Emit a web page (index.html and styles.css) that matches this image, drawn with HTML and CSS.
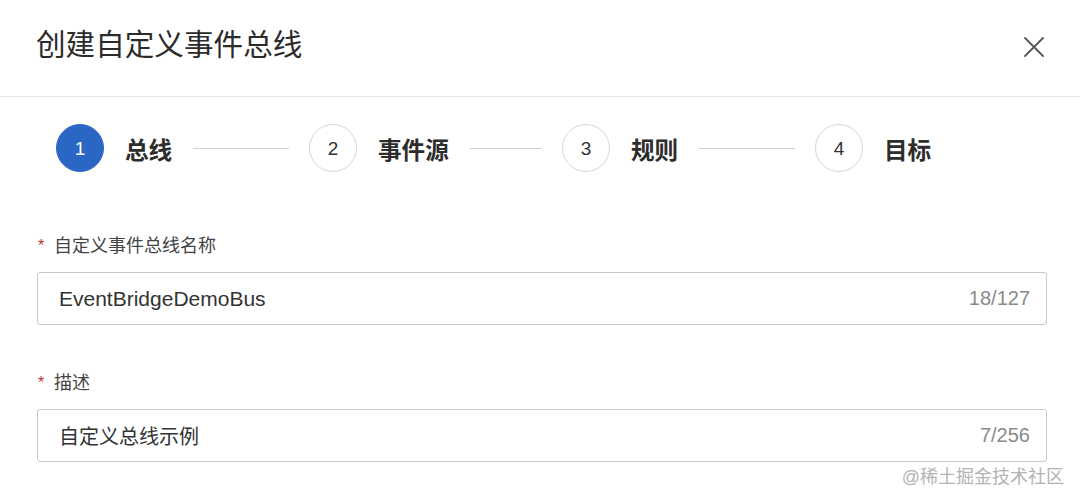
FILE: index.html
```html
<!DOCTYPE html>
<html lang="zh-CN">
<head>
<meta charset="utf-8">
<title>创建自定义事件总线</title>
<link rel="stylesheet" href="styles.css">
</head>
<body>
<div class="dialog">
  <header class="header">
    <h1 class="title">创建自定义事件总线</h1>
    <button class="close" aria-label="关闭">
      <svg width="20" height="20" viewBox="0 0 20 20"><path d="M1 1 L19 19 M19 1 L1 19" stroke="#555" stroke-width="1.8" fill="none" stroke-linecap="round"/></svg>
    </button>
  </header>
  <div class="steps">
    <div class="step active"><span class="dot">1</span><span class="step-label">总线</span><span class="line"></span></div>
    <div class="step"><span class="dot">2</span><span class="step-label">事件源</span><span class="line"></span></div>
    <div class="step"><span class="dot">3</span><span class="step-label">规则</span><span class="line"></span></div>
    <div class="step last"><span class="dot">4</span><span class="step-label">目标</span></div>
  </div>
  <form class="form">
    <div class="item">
      <label class="label"><span class="req">*</span>自定义事件总线名称</label>
      <div class="input"><span class="value latin">EventBridgeDemoBus</span><span class="count">18/127</span></div>
    </div>
    <div class="item second">
      <label class="label"><span class="req">*</span>描述</label>
      <div class="input"><span class="value">自定义总线示例</span><span class="count">7/256</span></div>
    </div>
  </form>
  <div class="watermark">@稀土掘金技术社区</div>
</div>
</body>
</html>
```
FILE: styles.css
```css
* { box-sizing: border-box; }
html, body { margin: 0; padding: 0; background: #fff; }
body {
  font-family: "Liberation Sans", "Noto Sans CJK SC", sans-serif;
  color: #333;
  width: 1080px;
  height: 502px;
  overflow: hidden;
}
.dialog { position: relative; height: 502px; }
.header {
  height: 97px;
  border-bottom: 1px solid #e6e6e6;
  display: flex;
  align-items: center;
  justify-content: space-between;
  padding: 0 36px 6px 36px;
}
.title {
  margin: 0;
  font-size: 29.6px;
  font-weight: 400;
  line-height: 40px;
  color: #2b2b2b;
}
.close {
  border: 0;
  background: transparent;
  padding: 0;
  width: 20px;
  height: 20px;
  display: flex;
  margin-top: 4px;
}
.steps {
  display: flex;
  padding: 27px 0 0 56px;
}
.step {
  flex: 0 0 253px;
  display: flex;
  align-items: center;
}
.step.last { flex: 0 0 auto; }
.dot {
  width: 48px;
  height: 48px;
  border-radius: 50%;
  border: 1px solid #d6d6d6;
  display: flex;
  align-items: center;
  justify-content: center;
  font-size: 19px;
  color: #333;
  flex: none;
  padding-top: 1px;
}
.step.active .dot {
  background: #2a66c3;
  border-color: #2a66c3;
  color: #fff;
}
.step-label {
  margin-left: 21px;
  font-size: 23.6px;
  font-weight: 700;
  color: #2d2d2d;
  line-height: 32px;
  margin-top: 6px;
}
.line {
  flex: 1;
  height: 1px;
  background: #cfcfcf;
  margin: 0 20px 0 21px;
}
.form {
  padding: 60px 33px 0 37px;
}
.item.second { margin-top: 44px; }
.label {
  display: flex;
  align-items: center;
  height: 24px;
  font-size: 18px;
  color: #444;
  margin-bottom: 16px;
}
.req {
  color: #b8323a;
  font-size: 16px;
  width: 17px;
  margin-top: 3px;
  padding-left: 1px;
}
.input {
  height: 53px;
  border: 1px solid #c9c9c9;
  border-radius: 3px;
  display: flex;
  align-items: center;
  justify-content: space-between;
  padding: 0 16px 0 21px;
  font-size: 20px;
}
.value { color: #333; }
.value.latin { font-size: 21px; }
.count { color: #8a8a8a; font-size: 20px; }
.watermark {
  position: absolute;
  right: 16px;
  top: 465px;
  font-size: 18px;
  line-height: 24px;
  color: #b3b3b3;
}
```
